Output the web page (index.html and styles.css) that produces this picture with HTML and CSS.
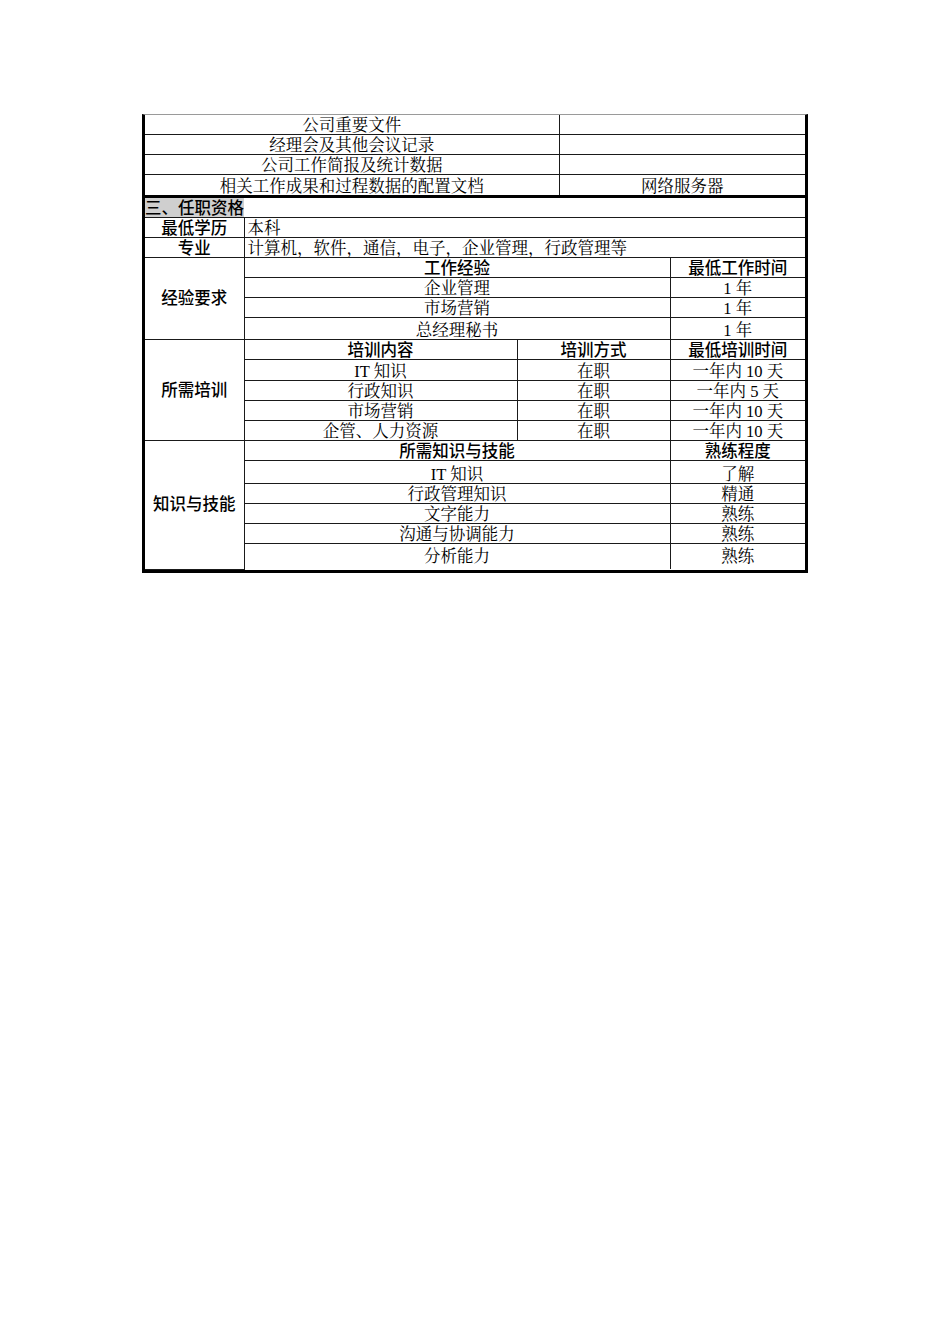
FILE: index.html
```html
<!DOCTYPE html>
<html lang="zh-CN">
<head>
<meta charset="utf-8">
<title>任职资格</title>
<link rel="stylesheet" href="styles.css">
</head>
<body>
<div class="page">
  <div class="frame">
    <table class="sheet">
      <colgroup>
        <col class="c-a"><col class="c-b"><col class="c-c"><col class="c-d"><col class="c-e">
      </colgroup>
      <tbody>
        <tr class="r20"><td colspan="3">公司重要文件</td><td colspan="2"></td></tr>
        <tr class="r20"><td colspan="3">经理会及其他会议记录</td><td colspan="2"></td></tr>
        <tr class="r20"><td colspan="3">公司工作简报及统计数据</td><td colspan="2"></td></tr>
        <tr class="r21"><td colspan="3">相关工作成果和过程数据的配置文档</td><td colspan="2">网络服务器</td></tr>

        <tr class="r20 sec"><td class="title">三、任职资格</td><td colspan="4" class="blank"></td></tr>
        <tr class="r20"><td class="lab">最低学历</td><td colspan="4" class="left">本科</td></tr>
        <tr class="r20"><td class="lab">专业</td><td colspan="4" class="left">计算机，软件，通信，电子，企业管理，行政管理等</td></tr>

        <tr class="r20"><td rowspan="4" class="lab mid">经验要求</td><td colspan="3" class="hd">工作经验</td><td class="hd">最低工作时间</td></tr>
        <tr class="r20"><td colspan="3">企业管理</td><td>1 年</td></tr>
        <tr class="r20"><td colspan="3">市场营销</td><td>1 年</td></tr>
        <tr class="r22"><td colspan="3">总经理秘书</td><td>1 年</td></tr>

        <tr class="r20"><td rowspan="5" class="lab mid">所需培训</td><td class="hd">培训内容</td><td colspan="2" class="hd gl">培训方式</td><td class="hd">最低培训时间</td></tr>
        <tr class="r21"><td>IT 知识</td><td colspan="2" class="gl">在职</td><td>一年内 10 天</td></tr>
        <tr class="r20"><td>行政知识</td><td colspan="2" class="gl">在职</td><td>一年内 5 天</td></tr>
        <tr class="r20"><td>市场营销</td><td colspan="2" class="gl">在职</td><td>一年内 10 天</td></tr>
        <tr class="r20"><td>企管、人力资源</td><td colspan="2" class="gl">在职</td><td>一年内 10 天</td></tr>

        <tr class="r20"><td rowspan="6" class="lab mid">知识与技能</td><td colspan="3" class="hd">所需知识与技能</td><td class="hd">熟练程度</td></tr>
        <tr class="r23"><td colspan="3">IT 知识</td><td>了解</td></tr>
        <tr class="r20"><td colspan="3">行政管理知识</td><td>精通</td></tr>
        <tr class="r20"><td colspan="3">文字能力</td><td>熟练</td></tr>
        <tr class="r20"><td colspan="3">沟通与协调能力</td><td>熟练</td></tr>
        <tr class="r26"><td colspan="3" class="midtxt">分析能力</td><td class="midtxt">熟练</td></tr>
      </tbody>
    </table>
  </div>
</div>
</body>
</html>
```

FILE: styles.css
```css
html, body {
  margin: 0;
  padding: 0;
  background: #ffffff;
}

.page {
  padding: 114px 0 0 142px;
}

.frame {
  width: 660px;
  border-left: 3px solid #000;
  border-right: 3px solid #000;
  border-bottom: 3px solid #000;
  border-top: 1px solid #9a9a9a;
}

.sheet {
  width: 660px;
  border-collapse: collapse;
  table-layout: fixed;
  font-family: "Liberation Serif", "Noto Serif CJK SC", "AR PL UMing CN", "Noto Sans CJK SC", serif;
  font-size: 16.5px;
  color: #000;
}

.c-a { width: 99px; }
.c-b { width: 273px; }
.c-c { width: 42px; }
.c-d { width: 111px; }
.c-e { width: 135px; }

.sheet td {
  padding: 0;
  border: 1px solid #1a1a1a;
  text-align: center;
  vertical-align: bottom;
  line-height: 17px;
  white-space: nowrap;
  overflow: hidden;
}

.sheet tr:first-child td { border-top: none; }
.sheet tr td:first-child { border-left: none; }
.sheet tr td:last-child { border-right: none; }
.sheet tr:last-child td { border-bottom: none; }

.r20 td { height: 19px; }
.r21 td { height: 20px; }
.r22 td { height: 21px; }
.r23 td { height: 22px; }
.r26 td { height: 25px; }

.sec td { border-top: 3px solid #000; }

.sheet td.title {
  background: #cfcfcf;
  text-align: left;
  font-family: "Liberation Sans", "Noto Sans CJK SC", sans-serif;
  font-weight: 500;
  border-right: none;
}

.sheet td.blank { border-left: none; }

.sheet td.lab {
  font-family: "Liberation Sans", "Noto Sans CJK SC", sans-serif;
  font-weight: 500;
}

.sheet td.mid { vertical-align: middle; }
.sheet td.midtxt { vertical-align: middle; }

.sheet td.hd {
  font-family: "Liberation Sans", "Noto Sans CJK SC", sans-serif;
  font-weight: 500;
}

.sheet td.left {
  text-align: left;
  padding-left: 3px;
}

.sheet td.gl { border-left-color: #9a9a9a; }
```
